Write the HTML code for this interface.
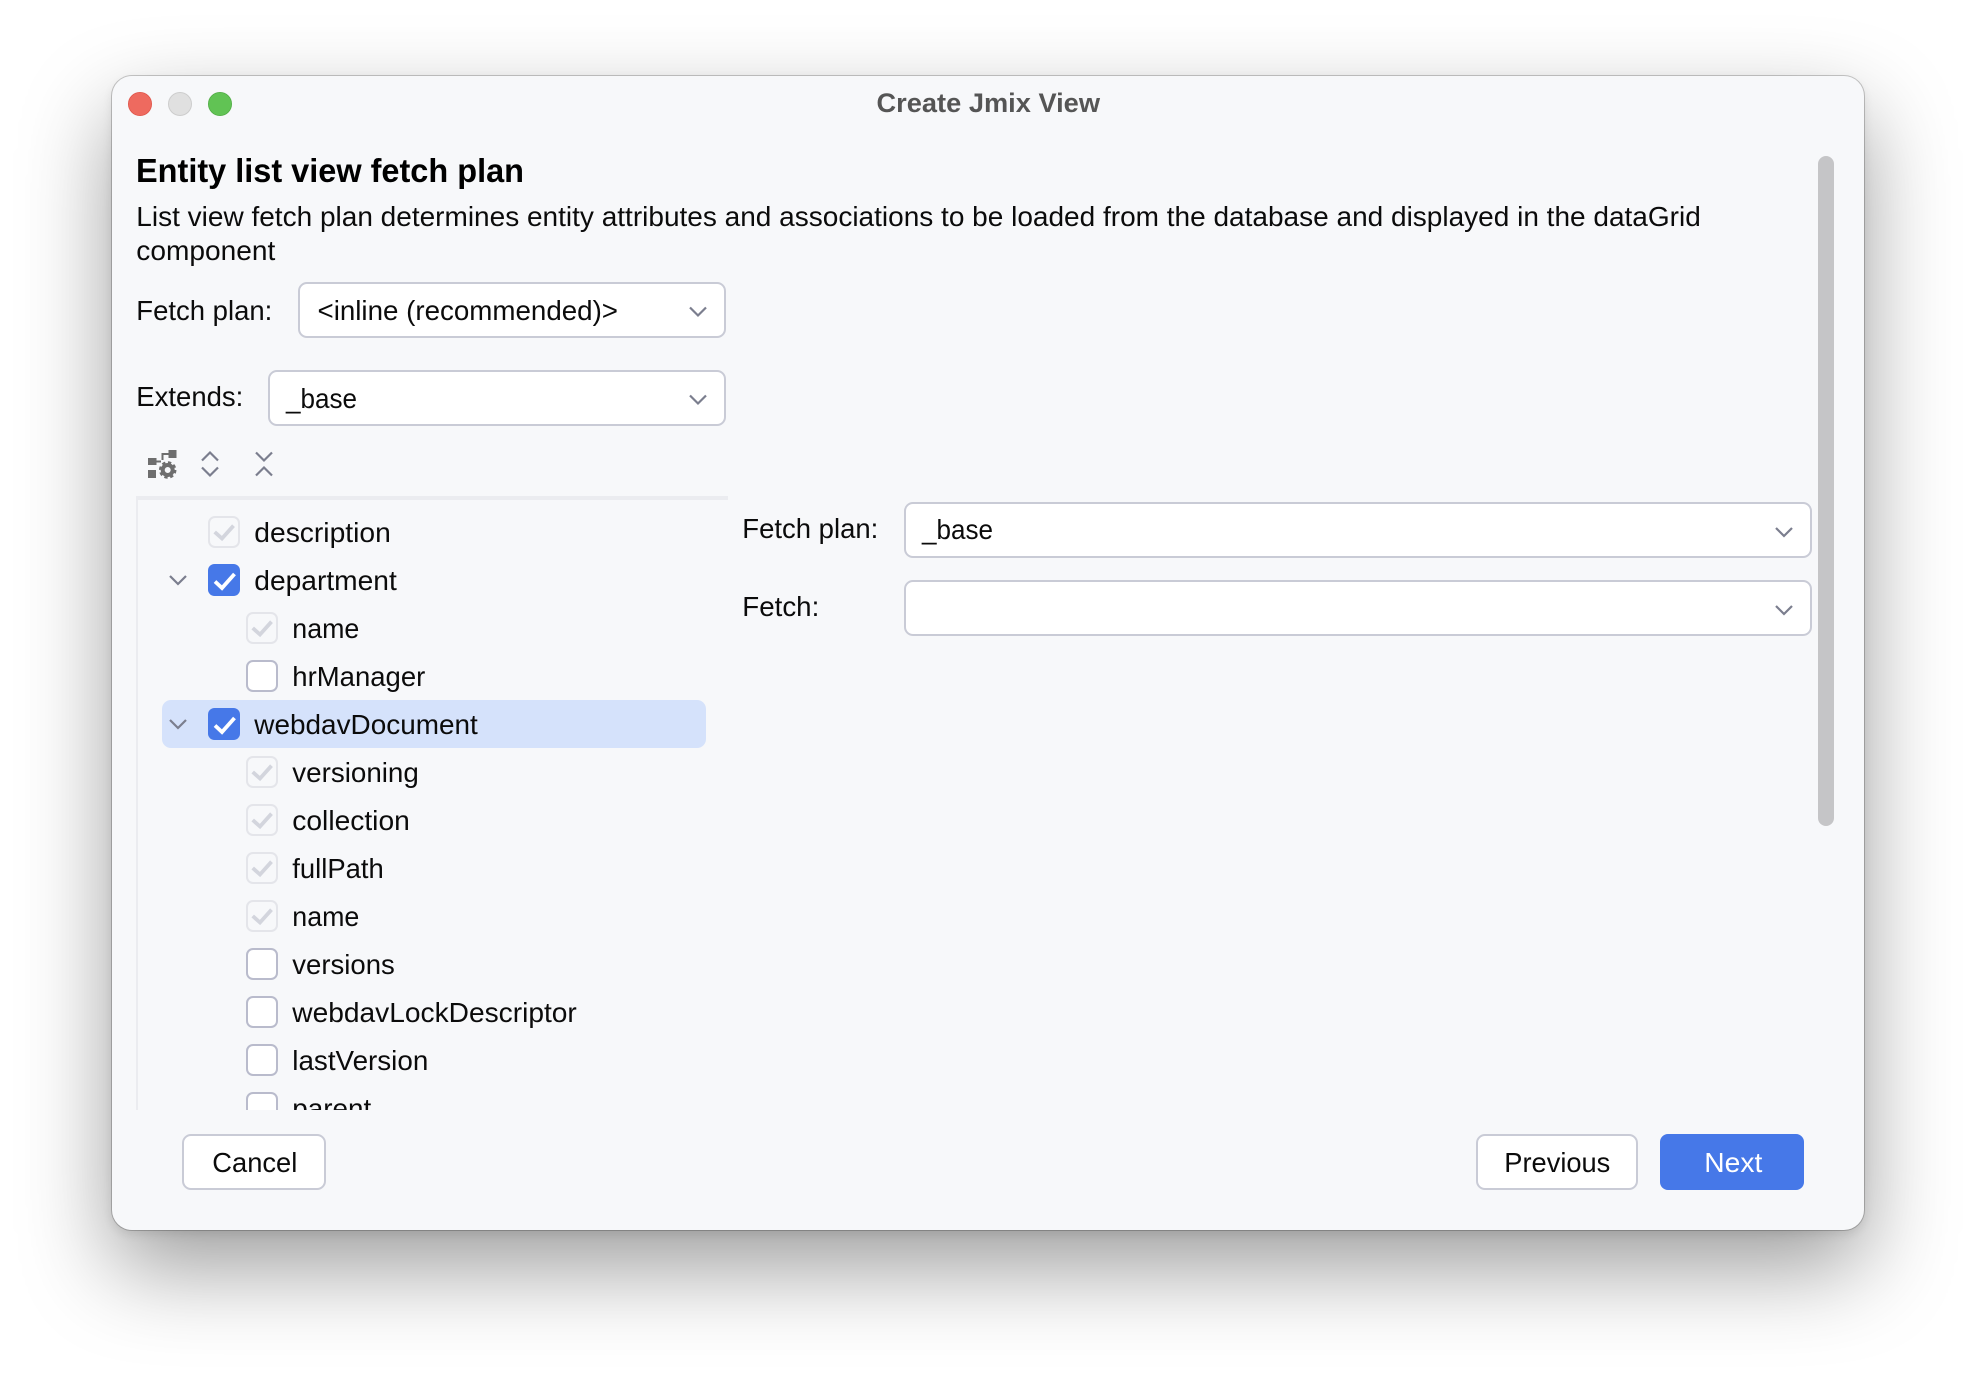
<!DOCTYPE html>
<html><head><meta charset="utf-8"><title>Create Jmix View</title>
<style>
html,body{margin:0;padding:0;width:1976px;height:1378px;background:#fff;overflow:hidden}
#win{position:absolute;left:112px;top:76px;width:1752px;height:1154px;background:#f7f8fa;border-radius:20px;box-shadow:0 0 0 1px rgba(0,0,0,.2),0 4px 10px rgba(0,0,0,.09),0 38px 90px rgba(0,0,0,.39)}
svg{position:absolute;left:0;top:0}
text{font-family:"Liberation Sans",sans-serif;font-size:27.5px;fill:#0b0b0b}
.b{fill:#fff;stroke:#c9cbd6;stroke-width:2}
.c{fill:none;stroke:#7b7e8e;stroke-width:2.2}
</style></head><body>
<div id="win"></div>
<svg width="1976" height="1378" viewBox="0 0 1976 1378" xmlns="http://www.w3.org/2000/svg">
<defs>
<clipPath id="t"><rect x="130" y="500" width="600" height="610"/></clipPath>
<g id="on"><rect width="32" height="32" rx="6.5" fill="#4678e8"/><path d="M7 17.500L14 24L26.500 10" fill="none" stroke="#fff" stroke-width="3.800"/></g>
<g id="dis"><rect x="1" y="1" width="30" height="30" rx="6" fill="#f7f8fa" stroke="#e4e5ea" stroke-width="2"/><path d="M6.700 16L14 22.500L25.500 9.700" fill="none" stroke="#d3d5dd" stroke-width="3.800"/></g>
<g id="off"><rect x="1" y="1" width="30" height="30" rx="6" fill="#fff" stroke="#b9bbcc" stroke-width="2"/></g>
</defs>
<!-- traffic lights -->
<circle cx="140" cy="104" r="11.600" fill="#ee6a5f" stroke="#e0564b" stroke-width=".8"/>
<circle cx="180" cy="104" r="11.500" fill="#e0e0e0" stroke="#cdcdcd"/>
<circle cx="220" cy="104" r="11.600" fill="#61c354" stroke="#52ad46" stroke-width=".8"/>
<text x="876.500" y="112" textLength="223.500" lengthAdjust="spacingAndGlyphs" style="font-weight:700;font-size:26.500px;fill:#555">Create Jmix View</text>
<!-- heading -->
<text x="136" y="182" textLength="388" lengthAdjust="spacingAndGlyphs" style="font-weight:700;font-size:33px;fill:#000">Entity list view fetch plan</text>
<text x="136.300" y="226" textLength="1564.500" lengthAdjust="spacingAndGlyphs">List view fetch plan determines entity attributes and associations to be loaded from the database and displayed in the dataGrid</text>
<text x="136.300" y="260" textLength="139" lengthAdjust="spacingAndGlyphs">component</text>
<!-- top combos -->
<text x="136.300" y="320" textLength="136" lengthAdjust="spacingAndGlyphs">Fetch plan:</text>
<rect class="b" x="299" y="283" width="426" height="54" rx="8"/>
<text x="317.500" y="320" textLength="300.500" lengthAdjust="spacingAndGlyphs">&lt;inline (recommended)&gt;</text>
<path class="c" d="M690 307.500L698 315.500L706 307.500"/>
<text x="136.300" y="406" textLength="107" lengthAdjust="spacingAndGlyphs">Extends:</text>
<rect class="b" x="269" y="371" width="456" height="54" rx="8"/>
<text x="286" y="408" textLength="71" lengthAdjust="spacingAndGlyphs">_base</text>
<path class="c" d="M690 395.500L698 403.500L706 395.500"/>
<!-- toolbar icons -->
<g fill="#6e6e6e">
<rect x="148" y="458" width="8.500" height="7"/><rect x="148" y="470" width="8" height="8"/><rect x="168.500" y="450" width="8" height="8"/>
<path d="M156 460.500h5v2h-5zM161.500 453h7.500v2h-5.500v5h-2z"/>
<circle cx="167.700" cy="470" r="5" fill="none" stroke="#6e6e6e" stroke-width="4"/>
<circle cx="167.700" cy="470" r="7.500" fill="none" stroke="#6e6e6e" stroke-width="2.500" stroke-dasharray="3.300 2.590"/>
</g>
<path class="c" d="M202 460.500L210 452.500L218 460.500M202 467.500L210 475.500L218 467.500"/>
<path class="c" d="M256 452.500L264 460.500L272 452.500M256 475.500L264 467.500L272 475.500"/>
<!-- tree frame -->
<rect x="136" y="496" width="592" height="4" fill="#ebecf0"/>
<rect x="136" y="496" width="2" height="614" fill="#ebecf0"/>
<rect x="162" y="700" width="544" height="48" rx="9" fill="#d5e2fb"/>
<path class="c" d="M170 576L178 584L186 576"/>
<path class="c" d="M170 720L178 728L186 720"/>
<g clip-path="url(#t)">
<use href="#dis" x="208" y="516"/><text x="254.300" y="542" textLength="136.500" lengthAdjust="spacingAndGlyphs">description</text>
<use href="#on" x="208" y="564"/><text x="254.300" y="590" textLength="142.500" lengthAdjust="spacingAndGlyphs">department</text>
<use href="#dis" x="246" y="612"/><text x="292.300" y="638" textLength="67" lengthAdjust="spacingAndGlyphs">name</text>
<use href="#off" x="246" y="660"/><text x="292.300" y="686" textLength="133" lengthAdjust="spacingAndGlyphs">hrManager</text>
<use href="#on" x="208" y="708"/><text x="254.300" y="734" textLength="223.500" lengthAdjust="spacingAndGlyphs">webdavDocument</text>
<use href="#dis" x="246" y="756"/><text x="292.300" y="782" textLength="126.500" lengthAdjust="spacingAndGlyphs">versioning</text>
<use href="#dis" x="246" y="804"/><text x="292.300" y="830" textLength="117.500" lengthAdjust="spacingAndGlyphs">collection</text>
<use href="#dis" x="246" y="852"/><text x="292.300" y="878" textLength="91.500" lengthAdjust="spacingAndGlyphs">fullPath</text>
<use href="#dis" x="246" y="900"/><text x="292.300" y="926" textLength="67" lengthAdjust="spacingAndGlyphs">name</text>
<use href="#off" x="246" y="948"/><text x="292.300" y="974" textLength="102.500" lengthAdjust="spacingAndGlyphs">versions</text>
<use href="#off" x="246" y="996"/><text x="292.300" y="1022" textLength="284.500" lengthAdjust="spacingAndGlyphs">webdavLockDescriptor</text>
<use href="#off" x="246" y="1044"/><text x="292.300" y="1070" textLength="136" lengthAdjust="spacingAndGlyphs">lastVersion</text>
<use href="#off" x="246" y="1092"/><text x="292.300" y="1118" textLength="79" lengthAdjust="spacingAndGlyphs">parent</text>
</g>
<!-- right panel -->
<text x="742.300" y="538" textLength="136" lengthAdjust="spacingAndGlyphs">Fetch plan:</text>
<rect class="b" x="905" y="503" width="906" height="54" rx="8"/>
<text x="922" y="539" textLength="71" lengthAdjust="spacingAndGlyphs">_base</text>
<path class="c" d="M1776 528L1784 536L1792 528"/>
<text x="742.300" y="616" textLength="77" lengthAdjust="spacingAndGlyphs">Fetch:</text>
<rect class="b" x="905" y="581" width="906" height="54" rx="8"/>
<path class="c" d="M1776 606L1784 614L1792 606"/>
<!-- scrollbar -->
<rect x="1818" y="156" width="16" height="670" rx="8" fill="#c5c5c7"/>
<!-- buttons -->
<rect class="b" x="183" y="1135" width="142" height="54" rx="8"/>
<text x="212.300" y="1172" textLength="85" lengthAdjust="spacingAndGlyphs">Cancel</text>
<rect class="b" x="1477" y="1135" width="160" height="54" rx="8"/>
<text x="1504.300" y="1172" textLength="106" lengthAdjust="spacingAndGlyphs">Previous</text>
<rect x="1660" y="1134" width="144" height="56" rx="8" fill="#4678e8"/>
<text x="1704.300" y="1172" textLength="58" lengthAdjust="spacingAndGlyphs" style="fill:#fff">Next</text>
</svg>
</body></html>
